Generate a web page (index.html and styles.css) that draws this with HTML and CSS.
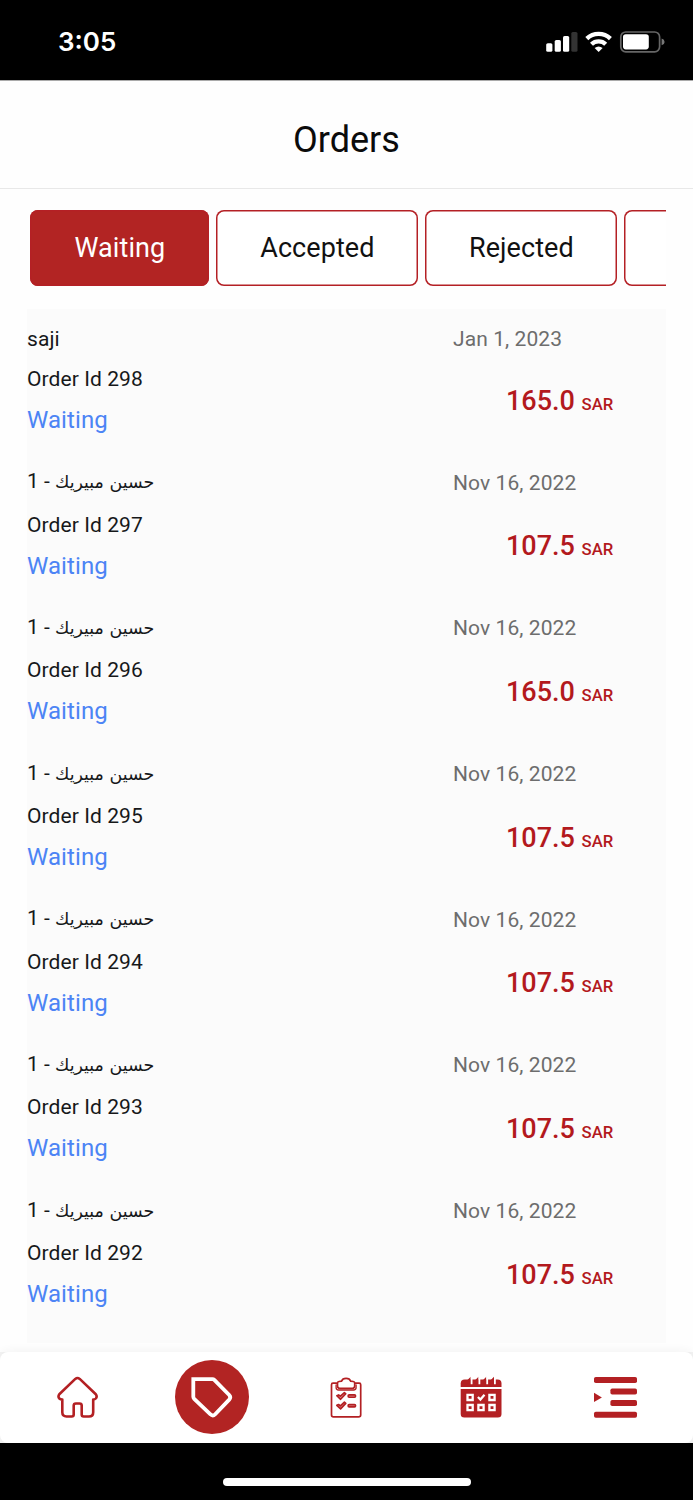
FILE: index.html
```
<!DOCTYPE html>
<html lang="en">
<head>
<meta charset="utf-8">
<title>Orders</title>
<link rel="stylesheet" href="styles.css">
</head>
<body>
<div class="screen">
  <div class="statusbar">
    <span class="clock">3:05</span>
    <svg class="status-icons" width="120" height="24" viewBox="545 30 120 24">
      <g fill="#fff">
        <rect x="546.2" y="43.2" width="6.2" height="8.6" rx="1.6"/>
        <rect x="554.7" y="40" width="6.2" height="11.8" rx="1.6"/>
        <rect x="563" y="36" width="6.2" height="15.8" rx="1.6"/>
        <rect x="571.3" y="32" width="6.2" height="19.8" rx="1.6" fill="#333"/>
      </g>
      <g fill="none" stroke="#fff" stroke-width="4.300">
        <path d="M586.800 38.600a17 17 0 0 1 23.600 0"/>
        <path d="M591.500 44.200a10.200 10.200 0 0 1 14.200 0"/>
      </g>
      <path d="M594.600 48Q598.600 44.900 602.600 48L598.600 52Z" fill="#fff"/>
      <rect x="620.800" y="32" width="38.800" height="19.800" rx="5" fill="none" stroke="#666" stroke-width="1.700"/>
      <rect x="623" y="34.200" width="25.800" height="15.200" rx="2.800" fill="#fff"/>
      <path d="M661.600 38.500q3 1 3 3.400t-3 3.400z" fill="#777"/>
    </svg>
  </div>
  <header class="header"><h1 class="title">Orders</h1></header>
  <main class="content">
    <nav class="tabs">
      <button class="tab tab-active">Waiting</button>
      <button class="tab tab-accepted">Accepted</button>
      <button class="tab tab-rejected">Rejected</button>
      <button class="tab tab-next" aria-label="More"></button>
    </nav>
    <section class="orders">
      <article class="order order-latin">
        <div class="info"><p class="name">saji</p><p class="id">Order Id 298</p><p class="state">Waiting</p></div>
        <div class="meta"><p class="date">Jan 1, 2023</p><p class="price">165.0 <small class="cur">SAR</small></p></div>
      </article>
      <article class="order">
        <div class="info"><p class="name">1 - <span class="ar">حسين مبيريك</span></p><p class="id">Order Id 297</p><p class="state">Waiting</p></div>
        <div class="meta"><p class="date">Nov 16, 2022</p><p class="price">107.5 <small class="cur">SAR</small></p></div>
      </article>
      <article class="order">
        <div class="info"><p class="name">1 - <span class="ar">حسين مبيريك</span></p><p class="id">Order Id 296</p><p class="state">Waiting</p></div>
        <div class="meta"><p class="date">Nov 16, 2022</p><p class="price">165.0 <small class="cur">SAR</small></p></div>
      </article>
      <article class="order">
        <div class="info"><p class="name">1 - <span class="ar">حسين مبيريك</span></p><p class="id">Order Id 295</p><p class="state">Waiting</p></div>
        <div class="meta"><p class="date">Nov 16, 2022</p><p class="price">107.5 <small class="cur">SAR</small></p></div>
      </article>
      <article class="order">
        <div class="info"><p class="name">1 - <span class="ar">حسين مبيريك</span></p><p class="id">Order Id 294</p><p class="state">Waiting</p></div>
        <div class="meta"><p class="date">Nov 16, 2022</p><p class="price">107.5 <small class="cur">SAR</small></p></div>
      </article>
      <article class="order">
        <div class="info"><p class="name">1 - <span class="ar">حسين مبيريك</span></p><p class="id">Order Id 293</p><p class="state">Waiting</p></div>
        <div class="meta"><p class="date">Nov 16, 2022</p><p class="price">107.5 <small class="cur">SAR</small></p></div>
      </article>
      <article class="order">
        <div class="info"><p class="name">1 - <span class="ar">حسين مبيريك</span></p><p class="id">Order Id 292</p><p class="state">Waiting</p></div>
        <div class="meta"><p class="date">Nov 16, 2022</p><p class="price">107.5 <small class="cur">SAR</small></p></div>
      </article>
    </section>
  </main>
  <div class="dock">
  <nav class="navbar">
    <a class="nav-item">
      <svg width="44" height="44" viewBox="-0.5 -0.8 44 44" fill="none" stroke="#b32023" stroke-width="2.600" stroke-linejoin="round">
        <path d="M19.800 3.100Q22 1.300 24.200 3.100L40.300 18.500Q42 20.700 40.300 22.700Q39.400 23.700 37.700 23.700V36.500Q37.700 40.700 33.500 40.700H28.200Q26.200 40.700 26.200 38.700V29.800Q26.200 27.700 24 27.700H20.400Q18.200 27.700 18.200 29.800V38.700Q18.200 40.700 16.200 40.700H11Q6.800 40.700 6.800 36.500V23.700Q4.900 23.700 3.800 22.700Q2.200 20.700 3.800 18.500Z"/>
      </svg>
    </a>
    <a class="nav-item">
      <span class="bubble">
        <svg width="74" height="74" viewBox="0 0 74 74" fill="none" stroke="#fff" stroke-width="3.800" stroke-linejoin="miter">
          <path d="M18.300 19.100H37.500Q38.500 19.100 39.300 19.900L54.200 35Q56.300 37.300 54.200 39.600L40.200 54.200Q37.800 56.600 35.200 54.200L19.200 38.800Q18.300 37.900 18.300 36.700Z"/>
        </svg>
      </span>
    </a>
    <a class="nav-item">
      <svg width="34" height="44" viewBox="329.500 1375 34 44" fill="none" stroke="#b32023" stroke-width="1.700" stroke-linejoin="round" stroke-linecap="round">
        <path d="M337 1383.200H333.500Q332 1383.200 332 1384.700V1415Q332 1416.900 334 1416.900H359Q361.200 1416.900 361.200 1415V1384.700Q361.200 1383.200 359.700 1383.200H356"/>
        <path d="M338 1383Q338 1381.700 339.500 1381.500L342 1381.200Q343 1378.300 346.600 1378.300T351.200 1381.200L353.700 1381.500Q355.200 1381.700 355.200 1383V1386Q355.200 1388.300 353 1388.300H340.200Q338 1388.300 338 1386Z"/>
        <path d="M336.600 1385V1387.500Q336.600 1390 339 1390H354Q356.600 1390 356.600 1387.500V1385" stroke-width="1.300"/>
        <g stroke-width="1.600" fill="#dc8a8c">
          <path d="M337.300 1395.700l1.800-.8 1.800 1.300 4-3.600 1.400 1.200-5.200 5.500Z"/>
          <path d="M337.300 1405.300l1.800-.8 1.800 1.300 4-3.600 1.400 1.200-5.200 5.500Z"/>
          <rect x="348.600" y="1394.900" width="7.500" height="2.300" rx="1.100"/>
          <rect x="348.600" y="1404.600" width="7.500" height="2.300" rx="1.100"/>
        </g>
      </svg>
    </a>
    <a class="nav-item">
      <svg width="44" height="44" viewBox="459 1375 44 44">
        <g fill="#b32023">
          <path d="M460.700 1387V1383.500Q460.700 1379.500 464.700 1379.500H497.600Q501.500 1379.500 501.500 1383.500V1387Z"/>
          <path d="M460.700 1388.900H501.500V1414Q501.500 1417.600 497.900 1417.600H464.300Q460.700 1417.600 460.700 1414Z"/>
          <path d="M467.500 1380L470.700 1376.700V1384H467.500ZM475.300 1380L478.500 1376.700V1384H475.300ZM483.100 1380L486.300 1376.700V1384H483.100ZM490.800 1380L494 1376.700V1384H490.800Z"/>
        </g>
        <path d="M471.600 1377V1384.200M479.400 1377V1384.200M487.200 1377V1384.200M494.900 1377V1384.200" stroke="#fff" stroke-width="1.800"/>
        <g fill="none" stroke="#fff" stroke-width="2.300">
          <path d="M467.500 1394.800h5.200v5.200h-5.200zM489.400 1394.800h5.200v5.200h-5.200zM467.500 1405h5.200v5.200h-5.200zM478.400 1405h5.200v5.200h-5.200zM489.400 1405h5.200v5.200h-5.200zM477.900 1397l2.500 2.500 4.100-4.700"/>
        </g>
      </svg>
    </a>
    <a class="nav-item">
      <svg width="46" height="44" viewBox="592 1375 46 44" fill="#b32023">
        <rect x="594" y="1377" width="43" height="6" rx="1.800"/>
        <rect x="610.400" y="1388.500" width="26.600" height="6" rx="1.800"/>
        <rect x="610.400" y="1400" width="26.600" height="6" rx="1.800"/>
        <rect x="594" y="1411.800" width="43" height="6" rx="1.800"/>
        <path d="M594 1392.700L601.900 1397.400L594 1402Z"/>
      </svg>
    </a>
  </nav>
  </div>
  <footer class="home-area"><div class="home-indicator"></div></footer>
</div>
</body>
</html>
```
FILE: styles.css
```
* { box-sizing: border-box; }
body { margin: 0; font-family: Roboto, "DejaVu Sans", sans-serif; color: #16181a; background: #fefefe; }
h1, p { margin: 0; font-weight: 400; }
.screen { width: 693px; height: 1500px; display: flex; flex-direction: column; overflow: hidden; }
.statusbar { height: 80px; flex: none; background: #000; display: flex; justify-content: space-between; align-items: flex-start; padding: 30px 28px 0 58px; }
.clock { color: #fff; font: 600 26px/24px Inter, sans-serif; }
.status-icons { display: block; }
.header { height: 109px; flex: none; border-top: 1px solid #aaa; border-bottom: 1px solid #e8e8e8; text-align: center; }
.title { font-size: 36px; line-height: 42px; padding-top: 38px; color: #0b0b0b; }
.content { flex: 1; min-height: 0; padding: 0 27px; overflow: hidden; }
.tabs { display: flex; gap: 7px; padding: 21px 0 23px 3.4px; overflow: hidden; }
.tab { flex: none; height: 76px; border: 0; box-shadow: inset 0 0 0 1.5px #b42025; border-radius: 8px; background: #fff; font: 400 27px/32px Roboto, sans-serif; letter-spacing: .08px; color: #111; padding: 0; }
.tab-active { width: 179px; background: #b22423; color: #fff; }
.tab-accepted { width: 202px; }
.tab-rejected { width: 192px; }
.tab-next { width: 180px; }
.orders { background: #fbfbfb; height: 1034px; }
.order { display: flex; justify-content: space-between; padding-top: 16px; }
.name, .id, .date { font-size: 21px; line-height: 28px; letter-spacing: .08px; }
.name { height: 31.4px; white-space: pre; }
.order-latin .name { height: 28px; }
.ar { font-family: "DejaVu Sans", sans-serif; font-size: 17.4px; letter-spacing: 0; }
.id { margin-top: 12px; }
.state { font-size: 24px; line-height: 30px; letter-spacing: .08px; margin: 12px 0 16.3px; color: #4c84f5; }
.meta { width: 213px; display: flex; flex-direction: column; justify-content: space-between; padding-top: 1.3px; }
.order-latin .meta { padding-top: 0; }
.date { color: #6d6d6d; }
.price { font-size: 27px; line-height: 32px; font-weight: 500; color: #b3191d; padding: 0 0 30.700px 53px; }
.cur { font-size: 16.7px; font-weight: 500; }
.dock { flex: none; background: #f3f3f3; }
.navbar { height: 91px; background: #fff; border-radius: 8px; box-shadow: 0 -2px 9px rgba(0,0,0,.045); display: grid; grid-template-columns: repeat(5, 134.5px); justify-content: center; align-items: center; padding: 0 1px 1px 0; }
.nav-item { display: flex; justify-content: center; }
.nav-item svg { display: block; }
.bubble { width: 74px; height: 74px; border-radius: 50%; background: #b22423; }
.home-area { height: 57px; flex: none; background: #000; display: flex; justify-content: center; padding-top: 35px; }
.home-indicator { width: 248px; height: 8px; border-radius: 4px; background: #fff; }
```
